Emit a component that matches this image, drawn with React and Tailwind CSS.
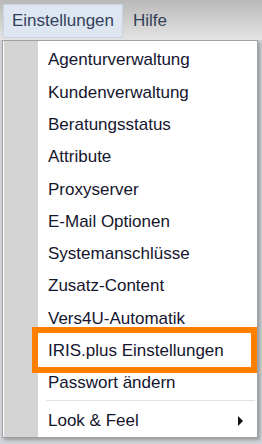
const items = [
  "Agenturverwaltung",
  "Kundenverwaltung",
  "Beratungsstatus",
  "Attribute",
  "Proxyserver",
  "E-Mail Optionen",
  "Systemanschlüsse",
  "Zusatz-Content",
  "Vers4U-Automatik",
  "IRIS.plus Einstellungen",
  "Passwort ändern",
]

export default function App() {
  return (
    <div
      className="relative h-[444px] w-[262px] overflow-hidden bg-[#cfd2d6]"
      style={{ fontFamily: '"Liberation Sans", Arial, sans-serif' }}
    >
      {/* menu bar */}
      <div className="flex h-[40px] items-start bg-gradient-to-b from-[#b9b9b9] to-[#e4e4e4] pl-[3px] pt-[4px] text-[17px] text-[#33415a]">
        <div className="flex h-[34px] w-[120px] items-center justify-center border border-[#c8d3e0] bg-[#dde6f1]">
          Einstellungen
        </div>
        <div className="flex h-[34px] items-center pl-[10px]">Hilfe</div>
      </div>

      {/* dropdown */}
      <div className="ml-[2px] flex w-[256px] border border-[#a0a0a0] bg-white shadow-[2px_2px_3px_rgba(0,0,0,0.25)]">
        <div className="ml-[1px] w-[34px] shrink-0 bg-[#d4d4d4]" />
        <div className="flex flex-1 flex-col pt-[3px] text-[17px] text-[#15152e]">
          {items.map((label) => (
            <div key={label} className="flex h-[32.3px] items-center pl-[10px]">
              {label}
            </div>
          ))}
          <div className="mb-[3px] ml-[8px] mr-[2px] mt-[1px] h-px bg-[#e2e2e2]" />
          <div className="flex h-[33px] items-center justify-between pl-[10px] pr-[14px]">
            <span>Look &amp; Feel</span>
            <span className="h-0 w-0 border-y-[5px] border-l-[5px] border-y-transparent border-l-[#111]" />
          </div>
        </div>
      </div>

      {/* highlight annotation */}
      <div className="absolute left-[32px] top-[327px] h-[46px] w-[225px] border-[6px] border-[#ff8000]" />
    </div>
  )
}
